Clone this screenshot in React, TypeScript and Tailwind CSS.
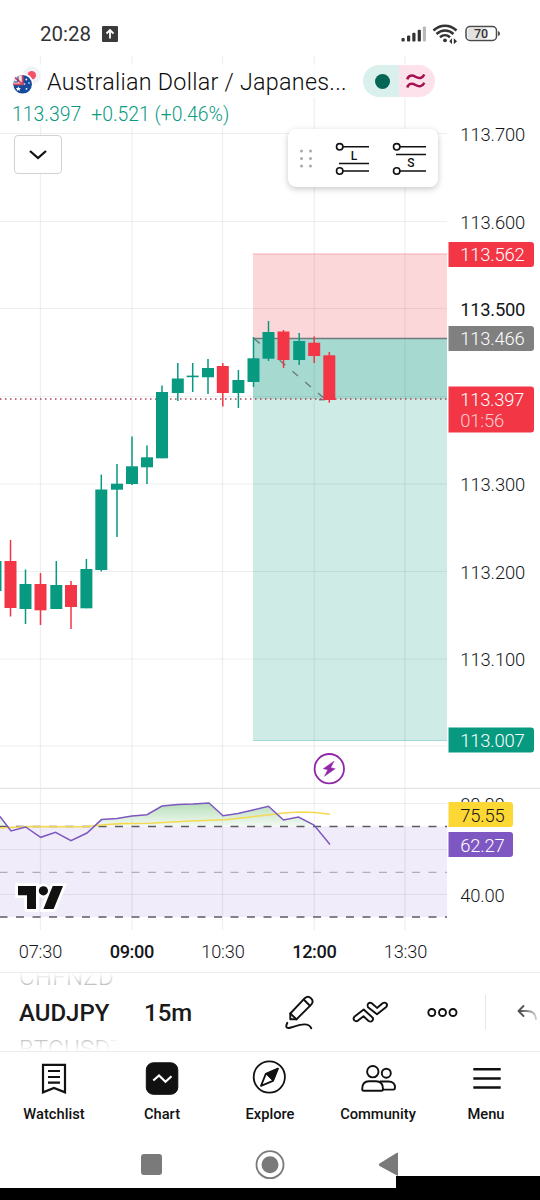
import React from "react";

type Candle = { x: number; high: number; top: number; bottom: number; low: number; up: boolean };

const candles: Candle[] = [
  { x: -4.5, high: 561, top: 561, bottom: 591, low: 591, up: true },
  { x: 10.5, high: 540, top: 561, bottom: 608, low: 616.5, up: false },
  { x: 25.5, high: 569.5, top: 584, bottom: 609, low: 624, up: true },
  { x: 40.5, high: 573, top: 584, bottom: 610.3, low: 625, up: false },
  { x: 56.3, high: 561, top: 585, bottom: 609, low: 609, up: true },
  { x: 71, high: 581, top: 585, bottom: 607, low: 629, up: false },
  { x: 86.4, high: 559, top: 569, bottom: 608.3, low: 608.3, up: true },
  { x: 101.3, high: 474.5, top: 489.5, bottom: 570, low: 571.5, up: true },
  { x: 117, high: 464, top: 483.7, bottom: 489.7, low: 537, up: true },
  { x: 132, high: 436.5, top: 466.3, bottom: 484, low: 485, up: true },
  { x: 147, high: 445.5, top: 457.3, bottom: 467.3, low: 484, up: true },
  { x: 162, high: 385.5, top: 392, bottom: 458.3, low: 458.3, up: true },
  { x: 177.8, high: 363, top: 378.5, bottom: 393, low: 401, up: true },
  { x: 192.7, high: 363, top: 375.6, bottom: 377.2, low: 392, up: true },
  { x: 208, high: 359, top: 368, bottom: 377.3, low: 394, up: true },
  { x: 222.8, high: 363, top: 366, bottom: 393, low: 406.5, up: false },
  { x: 238.4, high: 370, top: 380, bottom: 393, low: 408, up: true },
  { x: 253.5, high: 337, top: 358.3, bottom: 382, low: 387, up: true },
  { x: 268.5, high: 321, top: 332, bottom: 358.7, low: 361, up: true },
  { x: 283.5, high: 330, top: 331.5, bottom: 360, low: 368, up: false },
  { x: 299.2, high: 333, top: 341, bottom: 360, low: 365, up: true },
  { x: 314.2, high: 336.5, top: 342.7, bottom: 356, low: 363, up: false },
  { x: 329.3, high: 352, top: 355.3, bottom: 400, low: 402.7, up: false },
];

const gridX = [40.5, 132, 222.5, 314.3, 405];
const gridY = [133.5, 221.5, 308.5, 396.5, 484, 571.5, 659, 746, 803.5, 849.5, 894.5];

const priceLabels = [
  { y: 134, text: "113.700" },
  { y: 222, text: "113.600" },
  { y: 309, text: "113.500", strong: true },
  { y: 484.5, text: "113.300" },
  { y: 572, text: "113.200" },
  { y: 659, text: "113.100" },
];

const priceTags = [
  { y: 242, text: "113.562", fill: "#f23645" },
  { y: 326, text: "113.466", fill: "#808080" },
  { y: 727.5, text: "113.007", fill: "#089981" },
];

const timeLabels = [
  { x: 40.5, text: "07:30" },
  { x: 132, text: "09:00", strong: true },
  { x: 223, text: "10:30" },
  { x: 314.5, text: "12:00", strong: true },
  { x: 405.5, text: "13:30" },
];

const rsi =
  "0,816.5 11,831 25.6,827 40.7,837.3 55.5,832.3 71,840.7 87,833 101.5,819.6 117,818.5 132,816 147,814.7 162,806 178,804.4 193,804 209,803 223,815.7 238,813.5 253,810 268.5,806.2 283.5,820 298.5,817 314,825 330,844.5";
const rsiMa =
  "0,828 14,827.3 30,826.6 85,826.8 101,825 120,823.6 150,823.2 190,821 225,819.7 250,817 270,814.7 283.5,813 300,812 314.5,812.5 330,814.3";

const Chart: React.FC = () => (
  <svg width="540" height="916" viewBox="0 56 540 916" className="block font-[Roboto,sans-serif]">
    <defs>
      <linearGradient id="overbought" x1="0" y1="800" x2="0" y2="827" gradientUnits="userSpaceOnUse">
        <stop offset="0" stopColor="#4caf50" stopOpacity="0.45" />
        <stop offset="1" stopColor="#4caf50" stopOpacity="0.06" />
      </linearGradient>
      <clipPath id="plot">
        <rect x="0" y="56" width="447" height="880" />
      </clipPath>
      <clipPath id="above70">
        <rect x="0" y="789" width="447" height="37.5" />
      </clipPath>
    </defs>

    {/* long/short position zones */}
    <g clipPath="url(#plot)">
      <rect x="253" y="254" width="194" height="84.5" fill="#fbd7da" />
      <rect x="253" y="338.5" width="194" height="60.5" fill="#a6dad1" />
      <rect x="253" y="399" width="194" height="341.7" fill="#ceebe6" />
      <path d="M253 254H447" stroke="#f7a9b0" />
      <path d="M253 740.5H447" stroke="#a5d9d1" />
      <rect x="0" y="826.5" width="447" height="90.5" fill="#f0ecf9" />

      {gridX.map((x) => (
        <path key={x} d={`M${x} 56V930`} stroke="#2a2e39" strokeOpacity="0.08" strokeWidth="1.2" />
      ))}
      {gridY.map((y) => (
        <path key={y} d={`M0 ${y}H447`} stroke="#2a2e39" strokeOpacity="0.08" strokeWidth="1.1" />
      ))}

      <path d="M253 338.5H447" stroke="#6f7b7c" strokeWidth="1.3" />
      <path d="M254 338.5L325 399" stroke="#6c7c7a" strokeWidth="1.4" strokeDasharray="7.5 9.3" />
      <path d="M319 399.7H325" stroke="#6c7c7a" strokeWidth="1.4" />
      <path d="M0 399H447" stroke="#b04058" strokeWidth="1.4" strokeDasharray="1.5 3.5" />

      {candles.map((c) => (
        <g key={c.x} fill={c.up ? "#089981" : "#f23645"}>
          <rect x={c.x - 0.75} y={c.high} width="1.5" height={c.low - c.high} />
          <rect x={c.x - 6} y={c.top} width="12" height={c.bottom - c.top} />
        </g>
      ))}

      {/* oscillator pane */}
      <polygon points={`0,826.5 ${rsi} 330,826.5`} fill="url(#overbought)" clipPath="url(#above70)" />
      <path d="M-0.5 826.5H447M-0.5 917H447" stroke="#5d5a66" strokeWidth="1.3" strokeDasharray="8 8.5" />
      <path d="M-0.5 872.3H447" stroke="#b1aeb9" strokeWidth="1.3" strokeDasharray="8 8.5" />
      <polyline points={rsiMa} fill="none" stroke="#f5d952" strokeWidth="1.6" />
      <polyline points={rsi} fill="none" stroke="#7e57c2" strokeWidth="1.5" />
    </g>
    <path d="M0 788.3H540" stroke="#e3e4e7" strokeWidth="1.3" />

    {/* event marker */}
    <circle cx="329.3" cy="768.7" r="14.7" fill="#fff" stroke="#9127a8" strokeWidth="1.8" />
    <path d="M334 761.2L323.3 768.7L327.8 769.7L324.5 776.3L335.2 768.7L330.7 767.7Z" fill="#9127a8" stroke="#9127a8" strokeWidth="0.5" strokeLinejoin="round" />

    {/* logo */}
    <g stroke="#fff" strokeWidth="5.5" fill="#fff">
      <path d="M18 886H36V909H27V895.3H18Z" />
      <circle cx="43.4" cy="890.8" r="4.5" />
      <path d="M52.7 886H63L53.7 909H43.4Z" />
    </g>
    <g fill="#111">
      <path d="M18 886H36V909H27V895.3H18Z" />
      <circle cx="43.4" cy="890.8" r="4.6" />
      <path d="M52.7 886H63L53.7 909H43.4Z" />
    </g>

    {/* price scale */}
    <g fontSize="18.4" fontWeight="300" fill="#15171b">
      {priceLabels.map((l) => (
        <text key={l.text} x="460.3" y={l.y + 6.6} fontWeight={l.strong ? 400 : 300} textLength="65">
          {l.text}
        </text>
      ))}
      <text x="460.3" y="811" textLength="44.5">80.00</text>
      <text x="460.3" y="901.6" textLength="44.5">40.00</text>
    </g>
    <g fontSize="18.4" fontWeight="300" fill="#fff">
      {priceTags.map((t) => (
        <g key={t.text}>
          <path d={`M448.5 ${t.y}h82.5a3 3 0 0 1 3 3v19a3 3 0 0 1 -3 3h-82.5z`} fill={t.fill} />
          <text x="460.3" y={t.y + 19.2} textLength="64.5">{t.text}</text>
        </g>
      ))}
      <path d="M448.5 386.5h82.5a3 3 0 0 1 3 3v40a3 3 0 0 1 -3 3h-82.5z" fill="#f23645" />
      <text x="460.3" y="406" textLength="64">113.397</text>
      <text x="460.3" y="427" textLength="44" fillOpacity="0.75">01:56</text>
      <path d="M448.5 802h61.5a3 3 0 0 1 3 3v19a3 3 0 0 1 -3 3h-61.5z" fill="#fdd835" />
      <text x="460.3" y="821.5" textLength="44.5" fill="#15171b">75.55</text>
      <path d="M448.5 832h61.5a3 3 0 0 1 3 3v19a3 3 0 0 1 -3 3h-61.5z" fill="#7e57c2" />
      <text x="460.3" y="851.5" textLength="44.5">62.27</text>
    </g>

    {/* time scale */}
    <g fontSize="18.2" fill="#15171b" textAnchor="middle">
      {timeLabels.map((t) => (
        <text key={t.text} x={t.x} y="957.7" fontWeight={t.strong ? 500 : 300} textLength={t.strong ? 44.5 : 43.5}>
          {t.text}
        </text>
      ))}
    </g>
  </svg>
);

const StatusBar: React.FC = () => (
  <div className="flex h-14 items-center pt-3 pl-[40px] pr-[38px]">
    <span className="text-[20.5px] leading-6 text-[#333]">20:28</span>
    <svg width="16" height="16" viewBox="0 0 16 16" className="ml-[11px]">
      <rect width="16" height="16" rx="1" fill="#3a3a3a" />
      <path d="M8 12.5V4.5M4.5 7.5L8 4L11.5 7.5" fill="none" stroke="#fff" strokeWidth="1.8" />
    </svg>
    <svg width="102" height="22" viewBox="400 23 102 22" className="ml-auto">
      <g fill="#333">
        <rect x="401.5" y="38" width="3.2" height="3.5" rx="1" />
        <rect x="407" y="35.5" width="3.2" height="6" rx="1" />
        <rect x="412.3" y="32.7" width="3.2" height="8.8" rx="1" />
        <rect x="417.7" y="29.7" width="3.2" height="11.8" rx="1" />
        <rect x="422.8" y="26.5" width="3.2" height="15" rx="1" fill="#b9b9b9" />
      </g>
      <g fill="none" stroke="#333" strokeWidth="2.5">
        <path d="M433.5 30.5C440 24 450 24 456.5 30.5" />
        <path d="M436.5 34C441.5 29.2 448.5 29.2 453.5 34" />
        <path d="M440 37.3C443 34.6 447 34.6 450 37.3" />
      </g>
      <circle cx="445" cy="40.3" r="1.9" fill="#333" />
      <path d="M449.3 41.3L452 38.2V44.3ZM457 41.3L453.8 38.2V44.3Z" fill="#333" />
      <rect x="466" y="26.5" width="30.5" height="14" rx="4" fill="#fff" stroke="#4a4a4a" strokeWidth="1.5" />
      <path d="M470 28H486V39H470Q467.5 39 467.5 37V30Q467.5 28 470 28Z" fill="#e2e2e2" />
      <path d="M498 31V36Q500 35.5 500 33.5Q500 31.5 498 31Z" fill="#4a4a4a" />
      <text x="481" y="38" textAnchor="middle" fontSize="12.5" fontWeight="500" fill="#333" className="font-[Roboto,sans-serif]">70</text>
    </svg>
  </div>
);

const Flags: React.FC = () => (
  <svg width="29" height="30" viewBox="12 67 29 30" className="shrink-0">
    <circle cx="31.7" cy="76.3" r="9" fill="#eff2f7" />
    <circle cx="31.7" cy="76.3" r="4.3" fill="#f4506a" />
    <circle cx="22.6" cy="85.3" r="11" fill="#fff" />
    <circle cx="22.6" cy="85.3" r="9.3" fill="#154a9c" />
    <path d="M13.3 85.3A9.3 9.3 0 0 1 22.6 76V85.3Z" fill="#f8dfe3" />
    <path d="M15 78.5L22.6 85.3M22.6 76V85.3H13.3" stroke="#e0455a" strokeWidth="1.7" fill="none" />
    <path d="M18 77.5V83H14" stroke="#154a9c" strokeWidth="1" fill="none" />
    <g fill="#fff">
      <path d="M18.3 87.3l.8 1.6 1.8.1-1.3 1.2.4 1.8-1.7-.9-1.6.9.4-1.8-1.3-1.2 1.8-.1z" />
      <circle cx="26.3" cy="80.5" r="0.9" />
      <circle cx="24.5" cy="85" r="0.8" />
      <circle cx="29" cy="84" r="0.8" />
      <circle cx="26.5" cy="89.8" r="0.9" />
    </g>
  </svg>
);

const ChartHeader: React.FC = () => (
  <div className="absolute inset-x-0 top-0">
    <div className="flex w-[447px] items-center bg-white/75 mt-2 h-[34px] pl-3">
      <Flags />
      <span className="ml-[6px] w-[309px] whitespace-nowrap pt-[2px] text-[23.3px] font-light leading-8 tracking-[0.27px] text-[#0c0c0c]">
        Australian Dollar / Japanes...
      </span>
      <div className="ml-[7px] flex h-8 w-[72px] shrink-0 overflow-hidden rounded-full">
        <div className="flex w-9 items-center justify-center bg-[#daf0ec] pl-[2px]">
          <div className="size-[15px] rounded-full bg-[#056656]" />
        </div>
        <div className="flex w-9 items-center justify-center bg-[#fde2eb] pr-[3px]">
          <svg width="20" height="16" viewBox="0 0 20 16" fill="none" stroke="#a5104e" strokeWidth="2.5">
            <path d="M1.2 6.3C2.5 2.2 6 1.6 9.5 3.8C13 6 16.5 5.4 18.3 1.5" />
            <path d="M1.2 14.5C2.5 10.4 6 9.8 9.5 12C13 14.2 16.5 13.6 18.3 9.7" />
          </svg>
        </div>
      </div>
    </div>
    <div className="flex h-[28px] w-[240px] items-center gap-[10px] whitespace-nowrap bg-white/75 pl-3 pt-[6px] text-[19.4px] font-light text-[#0a9a82]">
      <span>113.397</span>
      <span>+0.521 (+0.46%)</span>
    </div>
    <div className="flex items-start justify-between pl-[13.5px] pr-[102px]">
      <button className="mt-[9px] flex h-[39px] w-12 items-center justify-center rounded border border-[#d2d2d6] bg-white">
        <svg width="18" height="10" viewBox="0 0 18 10" fill="none" stroke="#111" strokeWidth="2.3">
          <path d="M1 1L9 8L17 1" />
        </svg>
      </button>
      <div className="mt-[3px] h-[58px] w-[150px] rounded-lg bg-white shadow-[0_2px_6px_rgba(0,0,0,0.22)]">
        <svg width="150" height="58" viewBox="288 129 150 58" fill="none" stroke="#111" strokeWidth="1.6">
          <g fill="#aaa" stroke="none">
            {[151, 158.5, 166].map((y) => (
              <g key={y}>
                <circle cx="301.5" cy={y} r="1.5" />
                <circle cx="310.5" cy={y} r="1.5" />
              </g>
            ))}
          </g>
          <circle cx="339.7" cy="146.8" r="3.2" />
          <circle cx="339.7" cy="171" r="3.2" />
          <path d="M343 146.8H369M339 163.5H369M343 171H369" />
          <circle cx="396.7" cy="146.8" r="3.2" />
          <circle cx="396.7" cy="171" r="3.2" />
          <path d="M400 146.8H426M396 154.5H426M400 171H426" />
          <g stroke="none" fill="#111" fontSize="12" fontWeight="500" textAnchor="middle" className="font-[Roboto,sans-serif]">
            <text x="354" y="159.8">L</text>
            <text x="411" y="167.2">S</text>
          </g>
        </svg>
      </div>
    </div>
  </div>
);

const Toolbar: React.FC = () => (
  <div className="flex h-20 items-center border-y border-[#ebebed] pl-[19px] text-[24px]">
    {/* symbol wheel */}
    <div className="relative flex h-full w-[100px] flex-col items-start justify-center overflow-hidden pt-[2px] leading-[36px]">
      <span className="font-light tracking-[0.3px] text-[#777]">CHFNZD</span>
      <span className="font-medium text-[#1a1a1a]">AUDJPY</span>
      <span className="font-light tracking-[0.3px] text-[#777]">BTCUSDT</span>
      <div className="absolute inset-x-0 top-0 h-[18px] bg-linear-to-b from-white to-white/30" />
      <div className="absolute inset-x-0 bottom-0 h-[18px] bg-linear-to-t from-white to-white/30" />
      <div className="absolute bottom-0 right-0 h-6 w-6 bg-linear-to-l from-white to-transparent" />
    </div>
    <span className="ml-[25px] w-[48px] pt-[2px] font-medium text-[#1a1a1a]">15m</span>
    <svg width="348" height="60" viewBox="192 982 348 60" fill="none" stroke="#111" strokeWidth="1.9" strokeLinejoin="round" strokeLinecap="round">
      <g>
        <path d="M290.3 1013.5L304.8 998.2Q308 995.2 311 998.3Q314.2 1001.3 311.2 1004.6L296.5 1019.3H290.3Z" />
        <path d="M290.3 1013.5L296.5 1019.3M303.7 999.5L310 1005.7" />
        <path d="M287.3 1022.8Q284.5 1028.3 289 1028C296 1026.5 308 1020.5 311.3 1028.3" />
      </g>
      <g>
        <path d="M363.7 1009.5L354.3 1016.8Q352.8 1018.6 354.3 1020.4Q356 1021.9 358 1020.6L363.5 1016.3L368.6 1021Q370.8 1022.4 372.4 1020.7Q373.8 1018.6 372.2 1017.2Z" />
        <path d="M377 1014.3L368 1007.2Q366.8 1005.2 368.2 1003.5Q370 1002.2 371.8 1003.3L377 1007.9L382.6 1003.2Q384.6 1002 386.4 1003.4Q387.8 1005.2 386.2 1007Z" />
      </g>
      <circle cx="431.8" cy="1012.5" r="3.5" />
      <circle cx="442.5" cy="1012.5" r="3.5" />
      <circle cx="453" cy="1012.5" r="3.5" />
      <path d="M485.5 995V1029" stroke="#e7e7ea" strokeWidth="1.2" />
      <path d="M523.5 1006L518.5 1011L523.5 1016" stroke="#555" />
      <path d="M519 1011H527Q535.5 1011 536 1019" stroke="url(#undoFade)" />
      <defs>
        <linearGradient id="undoFade" x1="518" x2="540" y1="0" y2="0" gradientUnits="userSpaceOnUse">
          <stop offset="0" stopColor="#444" />
          <stop offset="1" stopColor="#e8e8e8" />
        </linearGradient>
      </defs>
    </svg>
  </div>
);

const tabs = [
  {
    name: "Watchlist",
    icon: (
      <>
        <path d="M7 4.8H29V32.3L18 28L7 32.3Z" />
        <path d="M12 11H24M12 17H24M12 22.7H24" />
      </>
    ),
  },
  {
    name: "Chart",
    icon: (
      <>
        <rect x="2.3" y="2.8" width="31.5" height="31.5" rx="7" fill="#111" stroke="#111" strokeWidth="1" />
        <path d="M9.3 20.5L15 15.5L21.5 21.8L27.5 16.3" stroke="#fff" />
      </>
    ),
  },
  {
    name: "Explore",
    icon: (
      <>
        <circle cx="17.3" cy="17" r="15.6" strokeWidth="1.8" />
        <path d="M26 8.5L13.8 13.8L9 25.8L21 20.8Z" strokeLinejoin="round" strokeWidth="1.8" />
        <path d="M26 8.5L13.8 13.8L21 20.8Z" fill="#111" stroke="#111" strokeWidth="1" />
      </>
    ),
  },
  {
    name: "Community",
    icon: (
      <>
        <circle cx="12.8" cy="11.7" r="5.7" strokeWidth="1.9" />
        <circle cx="26.3" cy="13.2" r="4.5" strokeWidth="1.9" />
        <path d="M2.2 29C2.2 24 4.8 21.3 9 21.3H16C20.3 21.3 23 24 23 29Q23 30.7 21.5 30.7H3.7Q2.2 30.7 2.2 29Z" strokeWidth="1.9" />
        <path d="M20 21.5H28.5C33 21.5 35 24.3 35 27.3Q35 29.6 33.3 29.6H23" strokeWidth="1.9" />
      </>
    ),
  },
  {
    name: "Menu",
    icon: <path d="M5.3 9.3H32.7M5.3 18.5H32.7M5.3 27.5H32.7" strokeWidth="2.6" />,
  },
];

const TabBar: React.FC = () => (
  <div className="flex h-[78px]">
    {tabs.map((tab) => (
      <div key={tab.name} className="flex flex-1 flex-col items-center pt-2">
        <svg width="36" height="36" viewBox="0 0 36 36" fill="none" stroke="#111" strokeWidth="2.2" overflow="visible">
          {tab.icon}
        </svg>
        <span className="mt-[8px] text-[14.7px] font-medium leading-5 text-[#111]">{tab.name}</span>
      </div>
    ))}
  </div>
);

const SystemNav: React.FC = () => (
  <div className="flex h-[70px] flex-col">
    <svg width="540" height="58" viewBox="0 1130 540 58" className="block">
      <rect x="141" y="1154" width="21" height="21" rx="3" fill="#7a7a7a" />
      <circle cx="270" cy="1164.7" r="13.5" fill="none" stroke="#7a7a7a" strokeWidth="1.8" />
      <circle cx="270" cy="1164.7" r="8.5" fill="#7a7a7a" />
      <path d="M398 1153V1176L379.5 1166Q378 1164.7 379.5 1163.4L396.5 1153Q397.5 1152.5 398 1153Z" fill="#7a7a7a" />
      <rect x="396" y="1176" width="144" height="12" fill="#000" />
    </svg>
    <div className="h-3 bg-black" />
  </div>
);

export default function App() {
  return (
    <div className="flex h-[1200px] w-[540px] flex-col overflow-hidden bg-white font-[Roboto,sans-serif]">
      <StatusBar />
      <div className="relative h-[916px]">
        <Chart />
        <ChartHeader />
      </div>
      <Toolbar />
      <TabBar />
      <SystemNav />
    </div>
  );
}
